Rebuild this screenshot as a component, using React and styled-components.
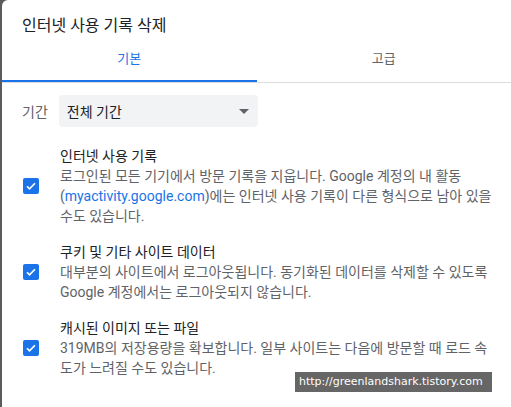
import React from "react";
import styled, { createGlobalStyle } from "styled-components";

const GlobalStyle = createGlobalStyle`
  html, body {
    margin: 0;
    padding: 0;
    background: #5b5b5b;
  }
  body {
    font-family: Roboto, "Noto Sans CJK KR", sans-serif;
  }
`;

const Dialog = styled.div`
  position: relative;
  margin-left: 2px;
  width: 509px;
  height: 407px;
  background: #fff;
  border-top-left-radius: 6px;
  overflow: hidden;
`;

const Title = styled.h1`
  margin: 0;
  padding: 14px 0 0 20px;
  height: 24px;
  line-height: 24px;
  font-size: 16px;
  font-weight: 400;
  color: #202124;
`;

const TabBar = styled.div`
  display: flex;
  border-bottom: 1px solid #dadce0;
`;

const Tab = styled.div`
  flex: 1;
  height: 42px;
  line-height: 42px;
  text-align: center;
  font-size: 13px;
  color: ${(p) => (p.active ? "#1a73e8" : "#5f6368")};
  border-bottom: 2px solid ${(p) => (p.active ? "#1a73e8" : "transparent")};
`;

const Body = styled.div`
  padding: 12px 0 0 20px;
`;

const PeriodRow = styled.div`
  display: flex;
  align-items: center;
  gap: 11px;
  margin-bottom: 19px;
`;

const Label = styled.span`
  font-size: 14px;
  color: #5f6368;
`;

const Select = styled.div`
  width: 199px;
  height: 32px;
  box-sizing: border-box;
  padding: 0 8px;
  display: flex;
  align-items: center;
  justify-content: space-between;
  background: #f1f3f4;
  border-radius: 4px;
  font-size: 14px;
  color: #202124;
`;

const Arrow = styled.span`
  width: 0;
  height: 0;
  margin-right: 1px;
  border-left: 5px solid transparent;
  border-right: 5px solid transparent;
  border-top: 5px solid #5f6368;
`;

const Item = styled.div`
  display: flex;
  align-items: center;
  gap: 21px;
  padding-left: 1px;
  margin-bottom: 16px;
`;

const Check = styled.span`
  flex: none;
  width: 16px;
  height: 16px;
  border-radius: 2px;
  background: #1a73e8;
  display: flex;
  align-items: center;
  justify-content: center;
`;

const Text = styled.div`
  font-size: 14px;
  line-height: 20px;
  white-space: nowrap;
`;

const ItemTitle = styled.div`
  color: #202124;
`;

const Desc = styled.div`
  color: #5f6368;
`;

const Link = styled.span`
  color: #1a73e8;
`;

const Watermark = styled.div`
  position: absolute;
  left: 293px;
  top: 372px;
  width: 197px;
  height: 20px;
  background: #666;
  color: #fff;
  font-family: "DejaVu Sans", sans-serif;
  font-size: 11px;
  line-height: 20px;
  padding-left: 4px;
  box-sizing: border-box;
`;

const CheckBox = () => (
  <Check>
    <svg width="12" height="12" viewBox="0 0 24 24">
      <path d="M4 12.5l5 5L20 6.5" fill="none" stroke="#fff" strokeWidth="3.4" />
    </svg>
  </Check>
);

export default function App() {
  return (
    <>
      <GlobalStyle />
      <Dialog>
        <Title>인터넷 사용 기록 삭제</Title>
        <TabBar>
          <Tab active>기본</Tab>
          <Tab>고급</Tab>
        </TabBar>
        <Body>
          <PeriodRow>
            <Label>기간</Label>
            <Select>
              <span>전체 기간</span>
              <Arrow />
            </Select>
          </PeriodRow>

          <Item>
            <CheckBox />
            <Text>
              <ItemTitle>인터넷 사용 기록</ItemTitle>
              <Desc>
                로그인된 모든 기기에서 방문 기록을 지웁니다. Google 계정의 내 활동
                <br />
                (<Link>myactivity.google.com</Link>)에는 인터넷 사용 기록이 다른 형식으로 남아 있을
                <br />
                수도 있습니다.
              </Desc>
            </Text>
          </Item>

          <Item>
            <CheckBox />
            <Text>
              <ItemTitle>쿠키 및 기타 사이트 데이터</ItemTitle>
              <Desc>
                대부분의 사이트에서 로그아웃됩니다. 동기화된 데이터를 삭제할 수 있도록
                <br />
                Google 계정에서는 로그아웃되지 않습니다.
              </Desc>
            </Text>
          </Item>

          <Item>
            <CheckBox />
            <Text>
              <ItemTitle>캐시된 이미지 또는 파일</ItemTitle>
              <Desc>
                319MB의 저장용량을 확보합니다. 일부 사이트는 다음에 방문할 때 로드 속
                <br />
                도가 느려질 수도 있습니다.
              </Desc>
            </Text>
          </Item>
        </Body>
        <Watermark>http://greenlandshark.tistory.com</Watermark>
      </Dialog>
    </>
  );
}
